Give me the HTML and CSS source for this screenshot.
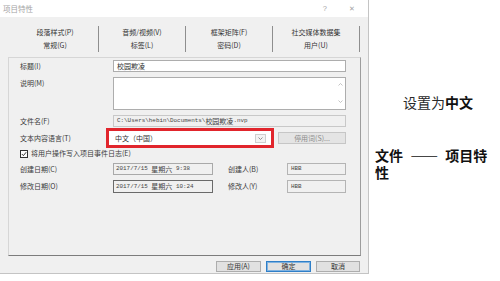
FILE: index.html
```html
<!DOCTYPE html>
<html lang="zh-CN">
<head>
<meta charset="utf-8">
<title>项目特性</title>
<link rel="stylesheet" href="styles.css">
</head>
<body>
<div class="page">
  <div class="dialog">
    <div class="titlebar">
      <span class="title">项目特性</span>
      <span class="help">?</span>
      <span class="close">✕</span>
    </div>
    <div class="tabs">
      <div class="tab"><span>段落样式(P)</span><span>常规(G)</span></div>
      <div class="tab"><span>音频/视频(V)</span><span>标签(L)</span></div>
      <div class="tab"><span>框架矩阵(F)</span><span>密码(D)</span></div>
      <div class="tab"><span>社交媒体数据集</span><span>用户(U)</span></div>
    </div>
    <div class="panel">
      <div class="row r-title">
        <span class="lbl">标题(I)</span>
        <div class="field">校园欺凌</div>
      </div>
      <div class="row r-desc">
        <span class="lbl">说明(M)</span>
        <div class="field area">
          <div class="sb">
            <svg width="5" height="3" viewBox="0 0 5 3"><polyline points="0.5,2.5 2.5,0.5 4.5,2.5" fill="none" stroke="#b5b5b5" stroke-width="0.8"/></svg>
            <svg width="5" height="3" viewBox="0 0 5 3"><polyline points="0.5,0.5 2.5,2.5 4.5,0.5" fill="none" stroke="#b5b5b5" stroke-width="0.8"/></svg>
          </div>
        </div>
      </div>
      <div class="row r-file">
        <span class="lbl">文件名(F)</span>
        <div class="field ro mono">C:\Users\hebin\Documents\<span class="cj">校园欺凌</span>.nvp</div>
      </div>
      <div class="row r-lang">
        <span class="lbl">文本内容语言(T)</span>
        <div class="lang">
          <span>中文（中国）</span>
          <span class="arrow"><svg width="5" height="3" viewBox="0 0 5 3"><polyline points="0.5,0.5 2.5,2.5 4.5,0.5" fill="none" stroke="#777" stroke-width="0.8"/></svg></span>
        </div>
        <div class="btn stop">停用词(S)...</div>
      </div>
      <div class="row r-check">
        <span class="cb"><svg width="6" height="6" viewBox="0 0 6 6"><polyline points="0.8,3 2.4,4.6 5.2,1.2" fill="none" stroke="#222" stroke-width="0.9"/></svg></span>
        <span>将用户操作写入项目事件日志(E)</span>
      </div>
      <div class="row r-created">
        <span class="lbl">创建日期(C)</span>
        <div class="field ro date mono">2017/7/15 <span class="cj">星期六</span> 9:38</div>
        <span class="lbl2">创建人(B)</span>
        <div class="field ro user mono">HBB</div>
      </div>
      <div class="row r-mod">
        <span class="lbl">修改日期(O)</span>
        <div class="field ro date focus mono">2017/7/15 <span class="cj">星期六</span> 10:24</div>
        <span class="lbl2">修改人(Y)</span>
        <div class="field ro user mono">HBB</div>
      </div>
    </div>
    <div class="buttons">
      <div class="btn">应用(A)</div>
      <div class="btn primary">确定</div>
      <div class="btn">取消</div>
    </div>
  </div>
  <div class="notes">
    <div class="note1">设置为<b>中文</b></div>
    <div class="note2">文件 —— 项目特性</div>
  </div>
</div>
</body>
</html>
```
FILE: styles.css
```css
html, body {
  margin: 0;
  padding: 0;
  background: #fff;
}
body {
  width: 500px;
  height: 281px;
  overflow: hidden;
  font-family: "Noto Sans CJK SC", "Liberation Sans", sans-serif;
}
.page {
  display: flex;
  align-items: flex-start;
}
.dialog {
  width: 369px;
  height: 274px;
  box-sizing: border-box;
  background: #f0f0f0;
  border-right: 1px solid #c4c4c4;
  border-bottom: 1px solid #c4c4c4;
  display: flex;
  flex-direction: column;
  font-size: 7px;
  line-height: 1;
  color: #3a3a3a;
  flex: none;
}
.titlebar {
  height: 17px;
  background: #fff;
  display: flex;
  align-items: center;
  padding-left: 3px;
  color: #a4a4a4;
  font-size: 7.5px;
}
.title { flex: 1; }
.help { margin-right: 22px; font-family: "Liberation Sans", sans-serif; }
.close { margin-right: 13px; font-size: 7px; }

.tabs {
  display: grid;
  grid-template-columns: repeat(4, 87px);
  margin: 9px 0 0 12px;
}
.tab {
  height: 26px;
  box-sizing: border-box;
  border-right: 1px solid #8e8e8e;
  display: flex;
  flex-direction: column;
  align-items: center;
  justify-content: center;
  line-height: 13px;
  color: #333;
}

.panel {
  margin: 5px 0 0 8px;
  width: 353px;
  height: 199px;
  box-sizing: border-box;
  border: 1px solid #d6d6d6;
  border-right-color: #9c9c9c;
  border-bottom-color: #7c7c7c;
  padding: 2px 14px 0 11px;
  display: flex;
  flex-direction: column;
}
.row {
  display: flex;
  align-items: center;
}
.lbl {
  width: 93px;
  flex: none;
}
.field {
  flex: 1;
  height: 12px;
  box-sizing: border-box;
  border: 1px solid #adadad;
  background: #fff;
  display: flex;
  align-items: center;
  padding-left: 3px;
  color: #333;
}
.r-title { height: 12px; }
.r-desc {
  margin-top: 5px;
  height: 33px;
  align-items: flex-start;
}
.r-desc .lbl { padding-top: 3px; }
.field.area {
  height: 33px;
  justify-content: flex-end;
  align-items: stretch;
  padding: 0;
}
.sb {
  width: 9px;
  display: flex;
  flex-direction: column;
  justify-content: space-between;
  align-items: center;
  padding: 5px 0 6px;
}
.r-file { margin-top: 5px; height: 12px; }
.field.ro {
  background: #f0f0f0;
  border-color: #c8c8c8;
}
.mono {
  font-family: "Liberation Mono", "Noto Sans CJK SC", monospace;
  font-size: 5.9px;
  color: #444;
  white-space: pre;
}
.cj {
  font-family: "Noto Sans CJK SC", sans-serif;
  font-size: 7px;
}
.r-lang {
  margin-top: 1px;
  height: 20px;
}
.lang {
  margin-left: -7px;
  width: 168px;
  height: 20px;
  flex: none;
  box-sizing: border-box;
  border: 3px solid #e1252c;
  background: #fff;
  display: flex;
  align-items: center;
  justify-content: space-between;
  padding: 1px 5px 0 6px;
  color: #333;
}
.arrow {
  width: 11px;
  height: 9px;
  box-sizing: border-box;
  border: 1px solid #cfcfcf;
  background: #f3f3f3;
  display: flex;
  align-items: center;
  justify-content: center;
}
.btn {
  height: 11px;
  box-sizing: border-box;
  border: 1px solid #adadad;
  background: #e1e1e1;
  display: flex;
  align-items: center;
  justify-content: center;
  color: #333;
  font-size: 7px;
}
.btn.stop {
  margin-left: 4px;
  flex: 1;
  height: 12px;
  border-color: #c6c6c6;
  background: #e4e4e4;
  color: #8c8c8c;
}
.r-check {
  height: 11px;
}
.cb {
  width: 8px;
  height: 8px;
  box-sizing: border-box;
  border: 1px solid #333;
  background: #fff;
  margin-right: 3px;
  display: flex;
  align-items: center;
  justify-content: center;
}
.r-created { margin-top: 4px; height: 12px; }
.r-mod { margin-top: 5px; height: 13px; }
.r-mod .field { height: 13px; }
.field.date {
  flex: none;
  width: 100px;
  padding-left: 2px;
  border-color: #a9a9a9;
}
.field.date.focus {
  border-color: #6a6a6a;
}
.lbl2 {
  width: 59px;
  flex: none;
  margin-left: 15px;
}
.field.user {
  border-color: #b4b4b4;
}
.buttons {
  display: flex;
  justify-content: flex-end;
  gap: 5px;
  margin-top: 5px;
  padding-right: 8px;
}
.buttons .btn { width: 45px; }
.buttons .btn:last-child { width: 44px; }
.btn.primary {
  border-color: #2f7fc8;
  box-shadow: inset 0 0 0 1px #7fb2e0;
}

.notes {
  flex: 1;
  display: flex;
  flex-direction: column;
  padding-top: 94px;
  font-size: 14px;
  line-height: 17px;
  color: #111;
}
.note1 {
  margin-left: 34px;
  color: #2a2a2a;
}
.note1 b { font-weight: 700; color: #111; }
.note2 {
  margin: 36px 0 0 6px;
  width: 118px;
  font-weight: 700;
  word-spacing: 4px;
}
```
